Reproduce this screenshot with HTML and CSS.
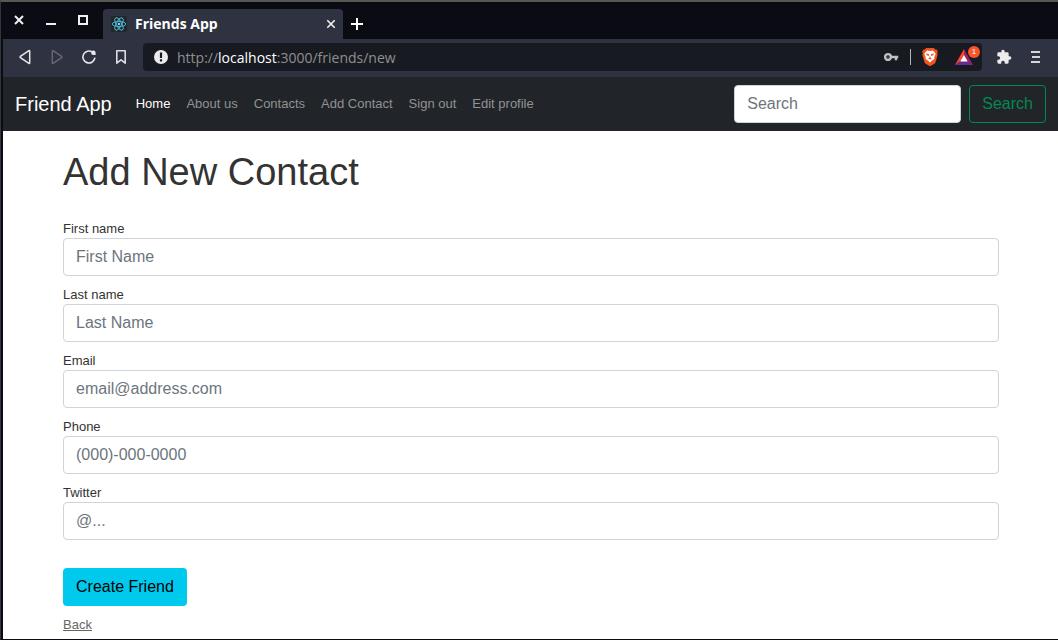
FILE: index.html
```html
<!DOCTYPE html>
<html lang="en">
<head>
<meta charset="utf-8">
<meta name="viewport" content="width=device-width, initial-scale=1">
<title>Friends App</title>
<link rel="stylesheet" href="styles.css">
</head>
<body>
<div class="window">
  <div class="tab-strip">
    <div class="window-controls">
      <button class="chrome-button" type="button" aria-label="Close window">
        <svg width="12" height="12" viewBox="0 0 12 12"><path d="M2 2l8 8M10 2l-8 8" fill="none" stroke="#eef0f4" stroke-width="2"/></svg>
      </button>
      <button class="chrome-button" type="button" aria-label="Minimize window">
        <svg width="12" height="12" viewBox="0 0 12 12"><path d="M1 9h10v2H1z" fill="#eef0f4"/></svg>
      </button>
      <button class="chrome-button" type="button" aria-label="Maximize window">
        <svg width="12" height="12" viewBox="0 0 12 12"><path d="M2 2h8v8H2z" fill="none" stroke="#eef0f4" stroke-width="2"/></svg>
      </button>
    </div>
    <div class="tab">
      <svg width="16" height="16" viewBox="0 0 16 16"><rect width="16" height="16" rx="2" fill="#20262b"/><g fill="none" stroke="#4fb3cc" stroke-width="1"><ellipse cx="8" cy="8" rx="6.8" ry="2.6"/><ellipse cx="8" cy="8" rx="6.8" ry="2.6" transform="rotate(60 8 8)"/><ellipse cx="8" cy="8" rx="6.8" ry="2.6" transform="rotate(120 8 8)"/></g><circle cx="8" cy="8" r="1.3" fill="#61dafb"/></svg>
      <span class="tab-title">Friends App</span>
      <button class="chrome-button" type="button" aria-label="Close tab">
        <svg width="10" height="10" viewBox="0 0 10 10"><path d="M1.3 1.3l7.4 7.4M8.700 1.3L1.3 8.700" fill="none" stroke="#f2f3f5" stroke-width="1.6"/></svg>
      </button>
    </div>
    <button class="chrome-button new-tab" type="button" aria-label="New tab">
      <svg width="12" height="12" viewBox="0 0 12 12"><path d="M6 0v12M0 6h12" fill="none" stroke="#fff" stroke-width="2"/></svg>
    </button>
  </div>

  <div class="toolbar">
    <div class="toolbar-group">
      <button class="chrome-button" type="button" aria-label="Go back">
        <svg width="16" height="16" viewBox="0 0 16 16"><path d="M12.700 2v12a.5.5 0 0 1-.8.4L3.400 8.600a.8.8 0 0 1 0-1.200L11.900 1.600a.5.5 0 0 1 .8.400z" fill="none" stroke="#e6e7ec" stroke-width="1.500"/></svg>
      </button>
      <button class="chrome-button" type="button" aria-label="Go forward">
        <svg width="16" height="16" viewBox="0 0 16 16"><path d="M3.300 2v12a.5.5 0 0 0 .8.4L12.600 8.600a.8.8 0 0 0 0-1.200L4.100 1.600a.5.5 0 0 0-.8.400z" fill="none" stroke="#666874" stroke-width="1.400"/></svg>
      </button>
      <button class="chrome-button" type="button" aria-label="Reload">
        <svg width="16" height="16" viewBox="0 0 16 16"><path d="M11.300 3A6 6 0 1 0 13.800 9.200" fill="none" stroke="#e6e7ec" stroke-width="1.600" stroke-linecap="round"/><path d="M10.200 4.200a2.200 2.200 0 0 1 4.400-1V6h-2.400a2 2 0 0 1-2-1.800z" fill="#e6e7ec"/></svg>
      </button>
      <button class="chrome-button" type="button" aria-label="Bookmark this page">
        <svg width="16" height="16" viewBox="0 0 16 16"><path d="M3.800 1.700h8.400v12.500L8 10.800l-4.200 3.400z" fill="none" stroke="#dcdde2" stroke-width="1.600" stroke-linejoin="round"/></svg>
      </button>
    </div>
    <div class="address-bar">
      <svg width="14" height="14" viewBox="0 0 14 14"><circle cx="7" cy="7" r="7" fill="#ececec"/><path d="M5.900 2.500h2.200v5.500H5.900zM5.900 9.300h2.200v2.200H5.900z" fill="#171a21"/></svg>
      <span class="url">http://<b class="url-host">localhost</b>:3000/friends/new</span>
      <div class="address-tools">
        <svg width="16" height="16" viewBox="0 0 16 16"><circle cx="5" cy="8" r="2.900" fill="none" stroke="#bfc0c2" stroke-width="2.400"/><circle cx="5" cy="8" r=".5" fill="#bfc0c2"/><path d="M8 6.800h7.200v2.400h-1v2.100h-2.400V9.200H8z" fill="#bfc0c2"/></svg>
        <span class="divider"></span>
        <svg width="16" height="20" viewBox="0 0 16 20"><path d="M4.200 1h7.600l1.500 1.600 1.400-.2 1.100 2.400-.6 1.600.5 1.300-2.200 7.600a3 3 0 0 1-1.100 1.500L8 19.200l-4.400-2.400a3 3 0 0 1-1.100-1.500L.3 7.700l.5-1.300-.6-1.600 1.100-2.400 1.400.2z" fill="#f0541e"/><path d="M5 3.500l3 .5 3-.5 2.700 3.200-1.500 3.700.2 1.600-2.300 1.400L8 15.500l-2.100-2.100L3.600 12l.2-1.600-1.500-3.700z" fill="#fff"/><path d="M4 6.500l2.800.6.2 1.900-2.300-.8zM12 6.500l-2.800.6-.2 1.900 2.300-.8zM8 8.300l.5 2.400 1.400.8-1.900.9-1.900-.9 1.400-.8z" fill="#f0541e"/></svg>
        <span class="rewards">
          <svg width="18" height="16" viewBox="0 0 18 16"><path d="M9 0L0 16l9-5z" fill="#ff4724"/><path d="M9 0l9 16-9-5z" fill="#9e1f63"/><path d="M0 16h18l-5-4H5z" fill="#662d91"/><path d="M9 6l3.700 6.400H5.300z" fill="#fff"/></svg>
          <span class="badge">1</span>
        </span>
      </div>
    </div>
    <div class="toolbar-group">
      <button class="chrome-button" type="button" aria-label="Extensions">
        <svg width="16" height="16" viewBox="0 0 24 24"><path d="M20.500 11H19V7a2 2 0 0 0-2-2h-4V3.500a2.500 2.500 0 0 0-5 0V5H4a2 2 0 0 0-2 2v3.800h1.500a2.700 2.700 0 0 1 0 5.400H2V20a2 2 0 0 0 2 2h3.800v-1.500a2.700 2.700 0 0 1 5.400 0V22H17a2 2 0 0 0 2-2v-4h1.500a2.500 2.500 0 0 0 0-5z" fill="#ececec"/></svg>
      </button>
      <button class="chrome-button" type="button" aria-label="Menu">
        <svg width="16" height="16" viewBox="0 0 16 16"><path d="M3 3h9M4 8h8M3 13h9" fill="none" stroke="#d6d7db" stroke-width="2"/></svg>
      </button>
    </div>
  </div>

  <div class="page">
    <nav class="navbar">
      <a class="brand" href="#">Friend App</a>
      <div class="nav-links">
        <a class="nav-link nav-link-active" href="#">Home</a>
        <a class="nav-link" href="#">About us</a>
        <a class="nav-link" href="#">Contacts</a>
        <a class="nav-link" href="#">Add Contact</a>
        <a class="nav-link" href="#">Sign out</a>
        <a class="nav-link" href="#">Edit profile</a>
      </div>
      <form class="search">
        <input class="control search-input" type="search" placeholder="Search" aria-label="Search">
        <button class="button button-outline" type="submit">Search</button>
      </form>
    </nav>
    <main class="content">
      <h1 class="title">Add New Contact</h1>
      <form class="contact-form">
        <div class="field"><label class="label" for="first">First name</label><input class="control" id="first" type="text" placeholder="First Name"></div>
        <div class="field"><label class="label" for="last">Last name</label><input class="control" id="last" type="text" placeholder="Last Name"></div>
        <div class="field"><label class="label" for="email">Email</label><input class="control" id="email" type="email" placeholder="email@address.com"></div>
        <div class="field"><label class="label" for="phone">Phone</label><input class="control" id="phone" type="tel" placeholder="(000)-000-0000"></div>
        <div class="field"><label class="label" for="twitter">Twitter</label><input class="control" id="twitter" type="text" placeholder="@..."></div>
        <div class="actions"><button class="button button-info" type="submit">Create Friend</button></div>
      </form>
      <a class="back" href="#">Back</a>
    </main>
  </div>
</div>
</body>
</html>
```
FILE: styles.css
```css
* {
  box-sizing: border-box;
}

body {
  margin: 0;
  background: #0b0b14;
  font-family: "Liberation Sans", Arial, sans-serif;
  font-size: 13px;
  color: #333;
}

svg {
  display: block;
  flex: none;
}

.window {
  display: flex;
  flex-direction: column;
  min-height: 100vh;
  border-top: 2px solid #555753;
  border-left: 1px solid #33343d;
  border-bottom: 1px solid #0b0b14;
  padding-left: 2px;
}

.chrome-button {
  display: flex;
  padding: 0;
  border: 0;
  background: none;
}

.tab-strip {
  display: flex;
  height: 37px;
  font-family: "Open Sans", "Noto Sans", sans-serif;
}

.window-controls {
  display: flex;
  align-items: center;
  gap: 20px;
  width: 100px;
  padding: 0 0 2px 10px;
}

.tab {
  display: flex;
  align-items: center;
  gap: 8px;
  width: 240px;
  margin-top: 7px;
  padding: 0 7px 0 8px;
  border-radius: 4px 4px 0 0;
  background: #2f3241;
}

.tab-title {
  flex: 1;
  padding-bottom: 2px;
  color: #fff;
  font-size: 14px;
  font-weight: 700;
}

.new-tab {
  align-items: center;
  margin: 7px 0 0 8px;
}

.toolbar {
  display: flex;
  align-items: center;
  gap: 14px;
  height: 38px;
  padding: 0 14px 2px;
  background: #2f3241;
}

.toolbar-group {
  display: flex;
  gap: 16px;
}

.address-bar {
  display: flex;
  flex: 1;
  align-items: center;
  gap: 9px;
  height: 28px;
  padding: 0 1px 0 11px;
  border-radius: 4px;
  background: #171a21;
}

.url {
  flex: 1;
  font-family: "Open Sans", "Noto Sans", sans-serif;
  font-size: 14px;
  color: #8f8f8f;
}

.url-host {
  color: #fff;
  font-weight: 400;
}

.address-tools {
  display: flex;
  align-items: center;
  gap: 11px;
}

.divider {
  width: 1px;
  height: 16px;
  background: #b5b6b9;
}

.rewards {
  position: relative;
  width: 26px;
  margin-left: 6px;
}

.badge {
  position: absolute;
  top: -3px;
  right: 1px;
  width: 12px;
  height: 12px;
  border-radius: 6px;
  background: #fb542b;
  color: #fff;
  font-size: 8px;
  line-height: 12px;
  text-align: center;
}

.page {
  flex: 1;
  background: #fff;
}

.navbar {
  display: flex;
  align-items: center;
  padding: 8px 12px;
  background: #212529;
}

.brand {
  margin-right: 16px;
  color: #fff;
  font-size: 20px;
  text-decoration: none;
}

.nav-links {
  display: flex;
  flex: 1;
}

.nav-link {
  padding: 8px;
  color: #909294;
  line-height: 20px;
  text-decoration: none;
}

.nav-link-active {
  color: #fff;
}

.search {
  display: flex;
  gap: 8px;
}

.control {
  width: 100%;
  height: 38px;
  padding: 6px 12px;
  border: 1px solid #ced4da;
  border-radius: 4px;
  background: #fff;
  color: #212529;
  font: 16px/24px "Liberation Sans", Arial, sans-serif;
}

.control::placeholder {
  color: #6c757d;
  opacity: 1;
}

.search-input {
  width: 227px;
}

.button {
  padding: 6px 12px;
  border: 1px solid transparent;
  border-radius: 4px;
  font: 16px/24px "Liberation Sans", Arial, sans-serif;
}

.button-outline {
  border-color: #068750;
  background: transparent;
  color: #068750;
}

.button-info {
  background: #00c9ee;
  color: #000;
}

.content {
  padding: 17px 59px 2px 60px;
}

.title {
  margin: 0 0 24px;
  font-size: 38px;
  font-weight: 400;
  line-height: 48px;
}

.contact-form {
  display: flex;
  flex-direction: column;
  gap: 10px;
}

.field {
  display: flex;
  flex-direction: column;
}

.label {
  line-height: 18px;
}

.actions {
  padding-top: 18px;
}

.back {
  display: inline-block;
  margin-top: 8px;
  color: #666;
  line-height: 22px;
}
```
